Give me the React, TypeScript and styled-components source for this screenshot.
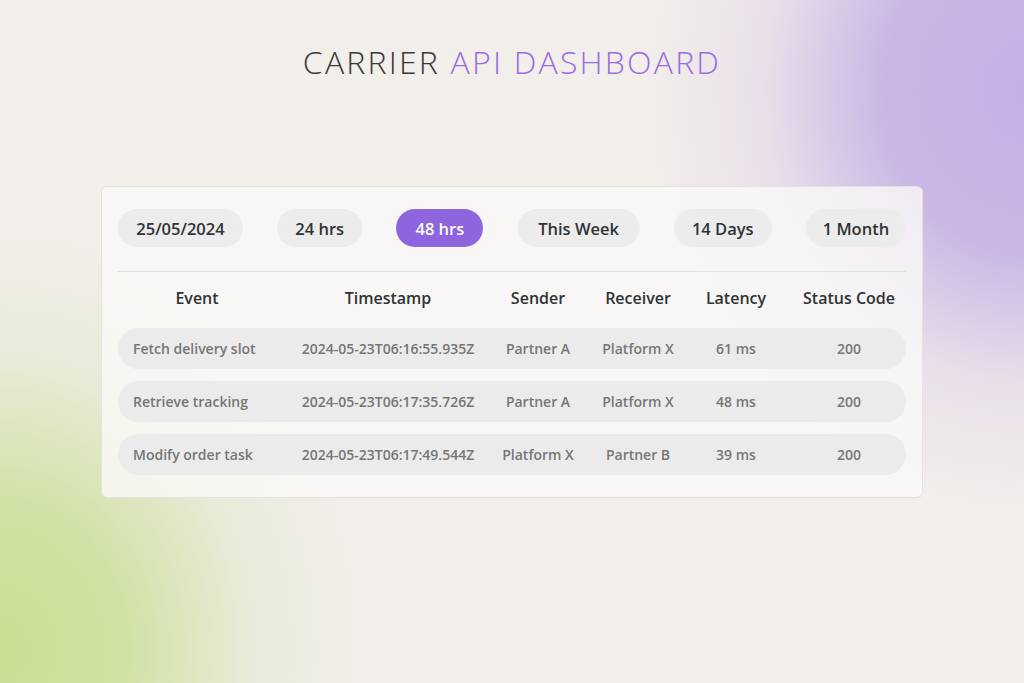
import React from "react";
import styled, { createGlobalStyle } from "styled-components";

const Global = createGlobalStyle`
  html, body { margin: 0; padding: 0; }
  body { font-family: "Open Sans", "Noto Sans", sans-serif; }
  * { box-sizing: border-box; }
`;

const Page = styled.div`
  width: 1024px;
  height: 683px;
  overflow: hidden;
  background:
    radial-gradient(ellipse 380px 420px at 1030px 90px, rgba(196, 176, 228, 1) 0%, rgba(198, 178, 228, 0.92) 38%, rgba(220, 205, 232, 0.45) 70%, rgba(242, 238, 234, 0) 100%),
    radial-gradient(ellipse 360px 420px at 0px 650px, rgba(200, 222, 146, 1) 0%, rgba(204, 224, 156, 0.88) 35%, rgba(222, 230, 196, 0.45) 70%, rgba(242, 238, 234, 0) 100%),
    #f2eeea;
  display: flex;
  flex-direction: column;
  align-items: center;
`;

const Title = styled.h1`
  margin: 40px 0 0;
  font-weight: 300;
  font-size: 32px;
  line-height: 44px;
  letter-spacing: 2.2px;
  color: #383838;
`;

const Accent = styled.span`
  color: #9a6ce4;
`;

const Card = styled.section`
  margin-top: 102px;
  width: 822px;
  padding: 22px 16px 22px;
  background: rgba(250, 249, 247, 0.8);
  border: 1px solid rgba(225, 222, 220, 0.9);
  border-radius: 6px;
`;

const Filters = styled.div`
  display: flex;
  justify-content: space-between;
  padding-bottom: 24px;
  border-bottom: 1px solid #e2e0de;
`;

const Pill = styled.button<{ $active?: boolean; $w: number }>`
  width: ${(p) => p.$w}px;
  height: 38px;
  border: none;
  border-radius: 19px;
  font-family: inherit;
  font-size: 16.5px;
  font-weight: 600;
  color: ${(p) => (p.$active ? "#ffffff" : "#2f3336")};
  background: ${(p) => (p.$active ? "#8e64df" : "#ececec")};
  cursor: pointer;
`;

const cols = "158px 224px 76px 124px 72px 1fr";

const HeaderRow = styled.div`
  display: grid;
  grid-template-columns: ${cols};
  height: 50px;
  align-items: center;
  margin-top: 1px;
`;

const HeadCell = styled.div<{ $shift?: number }>`
  text-align: center;
  font-size: 16px;
  font-weight: 600;
  color: #2f3336;
  white-space: nowrap;
  padding-left: ${(p) => p.$shift ?? 0}px;
`;

const Rows = styled.div`
  display: flex;
  flex-direction: column;
  gap: 12px;
  margin-top: 5px;
`;

const Row = styled.div`
  display: grid;
  grid-template-columns: ${cols};
  height: 41px;
  align-items: center;
  background: #ebebeb;
  border-radius: 21px;
`;

const Cell = styled.div<{ $left?: boolean; $shift?: number }>`
  text-align: ${(p) => (p.$left ? "left" : "center")};
  padding-left: ${(p) => (p.$left ? 15 : p.$shift ?? 0)}px;
  font-size: 14px;
  font-weight: 600;
  color: #767676;
  white-space: nowrap;
`;

const filters = [
  { label: "25/05/2024", w: 125 },
  { label: "24 hrs", w: 85 },
  { label: "48 hrs", w: 87, active: true },
  { label: "This Week", w: 122 },
  { label: "14 Days", w: 98 },
  { label: "1 Month", w: 100 },
];

const data = [
  ["Fetch delivery slot", "2024-05-23T06:16:55.935Z", "Partner A", "Platform X", "61 ms", "200"],
  ["Retrieve tracking", "2024-05-23T06:17:35.726Z", "Partner A", "Platform X", "48 ms", "200"],
  ["Modify order task", "2024-05-23T06:17:49.544Z", "Platform X", "Partner B", "39 ms", "200"],
];

const headers = ["Event", "Timestamp", "Sender", "Receiver", "Latency", "Status Code"];

export default function App() {
  return (
    <>
      <Global />
      <Page>
        <Title>
          CARRIER <Accent>API DASHBOARD</Accent>
        </Title>
        <Card>
          <Filters>
            {filters.map((f) => (
              <Pill key={f.label} $active={f.active} $w={f.w}>
                {f.label}
              </Pill>
            ))}
          </Filters>
          <HeaderRow>
            {headers.map((h, i) => (
              <HeadCell key={h} $shift={i === 5 ? 20 : 0}>
                {h}
              </HeadCell>
            ))}
          </HeaderRow>
          <Rows>
            {data.map((r) => (
              <Row key={r[1]}>
                {r.map((c, i) => (
                  <Cell key={i} $left={i === 0} $shift={i === 5 ? 20 : 0}>
                    {c}
                  </Cell>
                ))}
              </Row>
            ))}
          </Rows>
        </Card>
      </Page>
    </>
  );
}
